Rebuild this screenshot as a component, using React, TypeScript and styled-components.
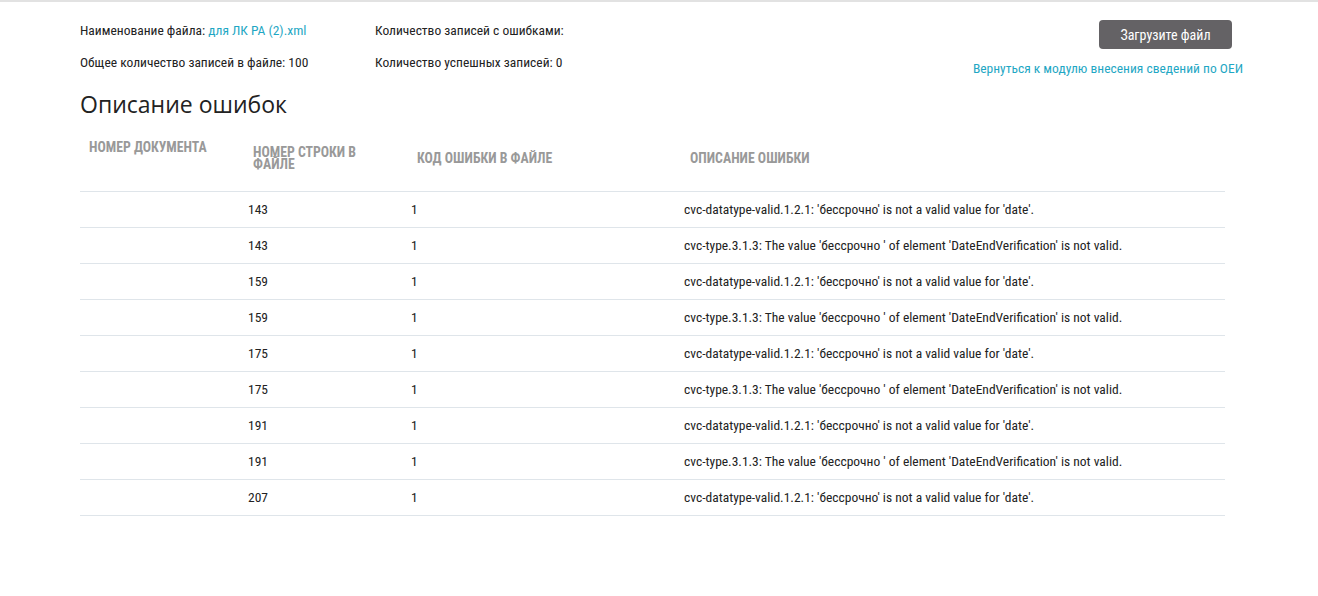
import * as React from 'react';
import styled, { createGlobalStyle } from 'styled-components';

const narrow = `"Roboto Condensed", "Liberation Sans", sans-serif`;

const GlobalStyle = createGlobalStyle`
  html, body {
    margin: 0;
    padding: 0;
    background: #fff;
  }
  body {
    font-family: ${narrow};
    color: #222;
  }
`;

const Page = styled.div`
  border-top: 2px solid #e2e2e2;
  padding: 12px 75px 40px 80px;
`;

const Top = styled.div`
  display: flex;
  justify-content: space-between;
  align-items: flex-start;
`;

const InfoGrid = styled.div`
  display: grid;
  grid-template-columns: 295px auto;
  grid-auto-rows: 32px;
  align-items: center;
  font-size: 13.5px;
`;

const InfoItem = styled.div`
  white-space: nowrap;
`;

const Link = styled.a`
  color: #1fa7c4;
  text-decoration: none;
  cursor: pointer;
`;

const Actions = styled.div`
  display: flex;
  flex-direction: column;
  align-items: flex-end;
  padding-top: 6px;
`;

const UploadButton = styled.button`
  width: 133px;
  height: 29px;
  margin-right: 11px;
  border: none;
  border-radius: 4px;
  background: #646265;
  color: #fff;
  font-family: ${narrow};
  font-size: 14px;
  cursor: pointer;
`;

const BackLink = styled(Link)`
  margin-top: 11px;
  font-size: 13.5px;
`;

const Title = styled.h2`
  margin: 10px 0 0;
  font-family: "Open Sans", "Noto Sans", sans-serif;
  font-weight: 400;
  font-size: 23px;
  line-height: 33px;
  color: #222;
`;

const Table = styled.table`
  width: 1145px;
  border-collapse: collapse;
  table-layout: fixed;
  margin-top: 4px;
`;

const Th = styled.th<{ $w?: number; $pl: number; $pr?: number; $top?: boolean }>`
  width: ${(p) => (p.$w ? `${p.$w}px` : 'auto')};
  height: 66px;
  box-sizing: border-box;
  padding: ${(p) => (p.$top ? '16px' : '0')} ${(p) => p.$pr ?? 8}px 0 ${(p) => p.$pl}px;
  vertical-align: ${(p) => (p.$top ? 'top' : 'middle')};
  text-align: left;
  font-size: 13.75px;
  line-height: 12px;
  font-weight: 700;
  text-transform: uppercase;
  color: #999;
  border-bottom: 1px solid #dfe5ea;
`;

const Td = styled.td`
  height: 36px;
  box-sizing: border-box;
  padding: 0 8px;
  font-size: 13.5px;
  color: #222;
  border-bottom: 1px solid #dfe5ea;
  white-space: nowrap;
`;

const errDate = "cvc-datatype-valid.1.2.1: 'бессрочно' is not a valid value for 'date'.";
const errType = "cvc-type.3.1.3: The value 'бессрочно ' of element 'DateEndVerification' is not valid.";

const rows = [
  { line: 143, code: 1, text: errDate },
  { line: 143, code: 1, text: errType },
  { line: 159, code: 1, text: errDate },
  { line: 159, code: 1, text: errType },
  { line: 175, code: 1, text: errDate },
  { line: 175, code: 1, text: errType },
  { line: 191, code: 1, text: errDate },
  { line: 191, code: 1, text: errType },
  { line: 207, code: 1, text: errDate },
];

export default function App(): JSX.Element {
  return (
    <Page>
      <GlobalStyle />
      <Top>
        <InfoGrid>
          <InfoItem>
            Наименование файла: <Link>для ЛК РА (2).xml</Link>
          </InfoItem>
          <InfoItem>Количество записей с ошибками:</InfoItem>
          <InfoItem>Общее количество записей в файле: 100</InfoItem>
          <InfoItem>Количество успешных записей: 0</InfoItem>
        </InfoGrid>
        <Actions>
          <UploadButton>Загрузите файл</UploadButton>
          <BackLink>Вернуться к модулю внесения сведений по ОЕИ</BackLink>
        </Actions>
      </Top>
      <Title>Описание ошибок</Title>
      <Table>
        <thead>
          <tr>
            <Th $w={160} $pl={9} $top>
              Номер документа
            </Th>
            <Th $w={163} $pl={13} $pr={40}>
              Номер строки в файле
            </Th>
            <Th $w={273} $pl={14}>
              Код ошибки в файле
            </Th>
            <Th $pl={14}>Описание ошибки</Th>
          </tr>
        </thead>
        <tbody>
          {rows.map((r, i) => (
            <tr key={i}>
              <Td></Td>
              <Td>{r.line}</Td>
              <Td>{r.code}</Td>
              <Td>{r.text}</Td>
            </tr>
          ))}
        </tbody>
      </Table>
    </Page>
  );
}
